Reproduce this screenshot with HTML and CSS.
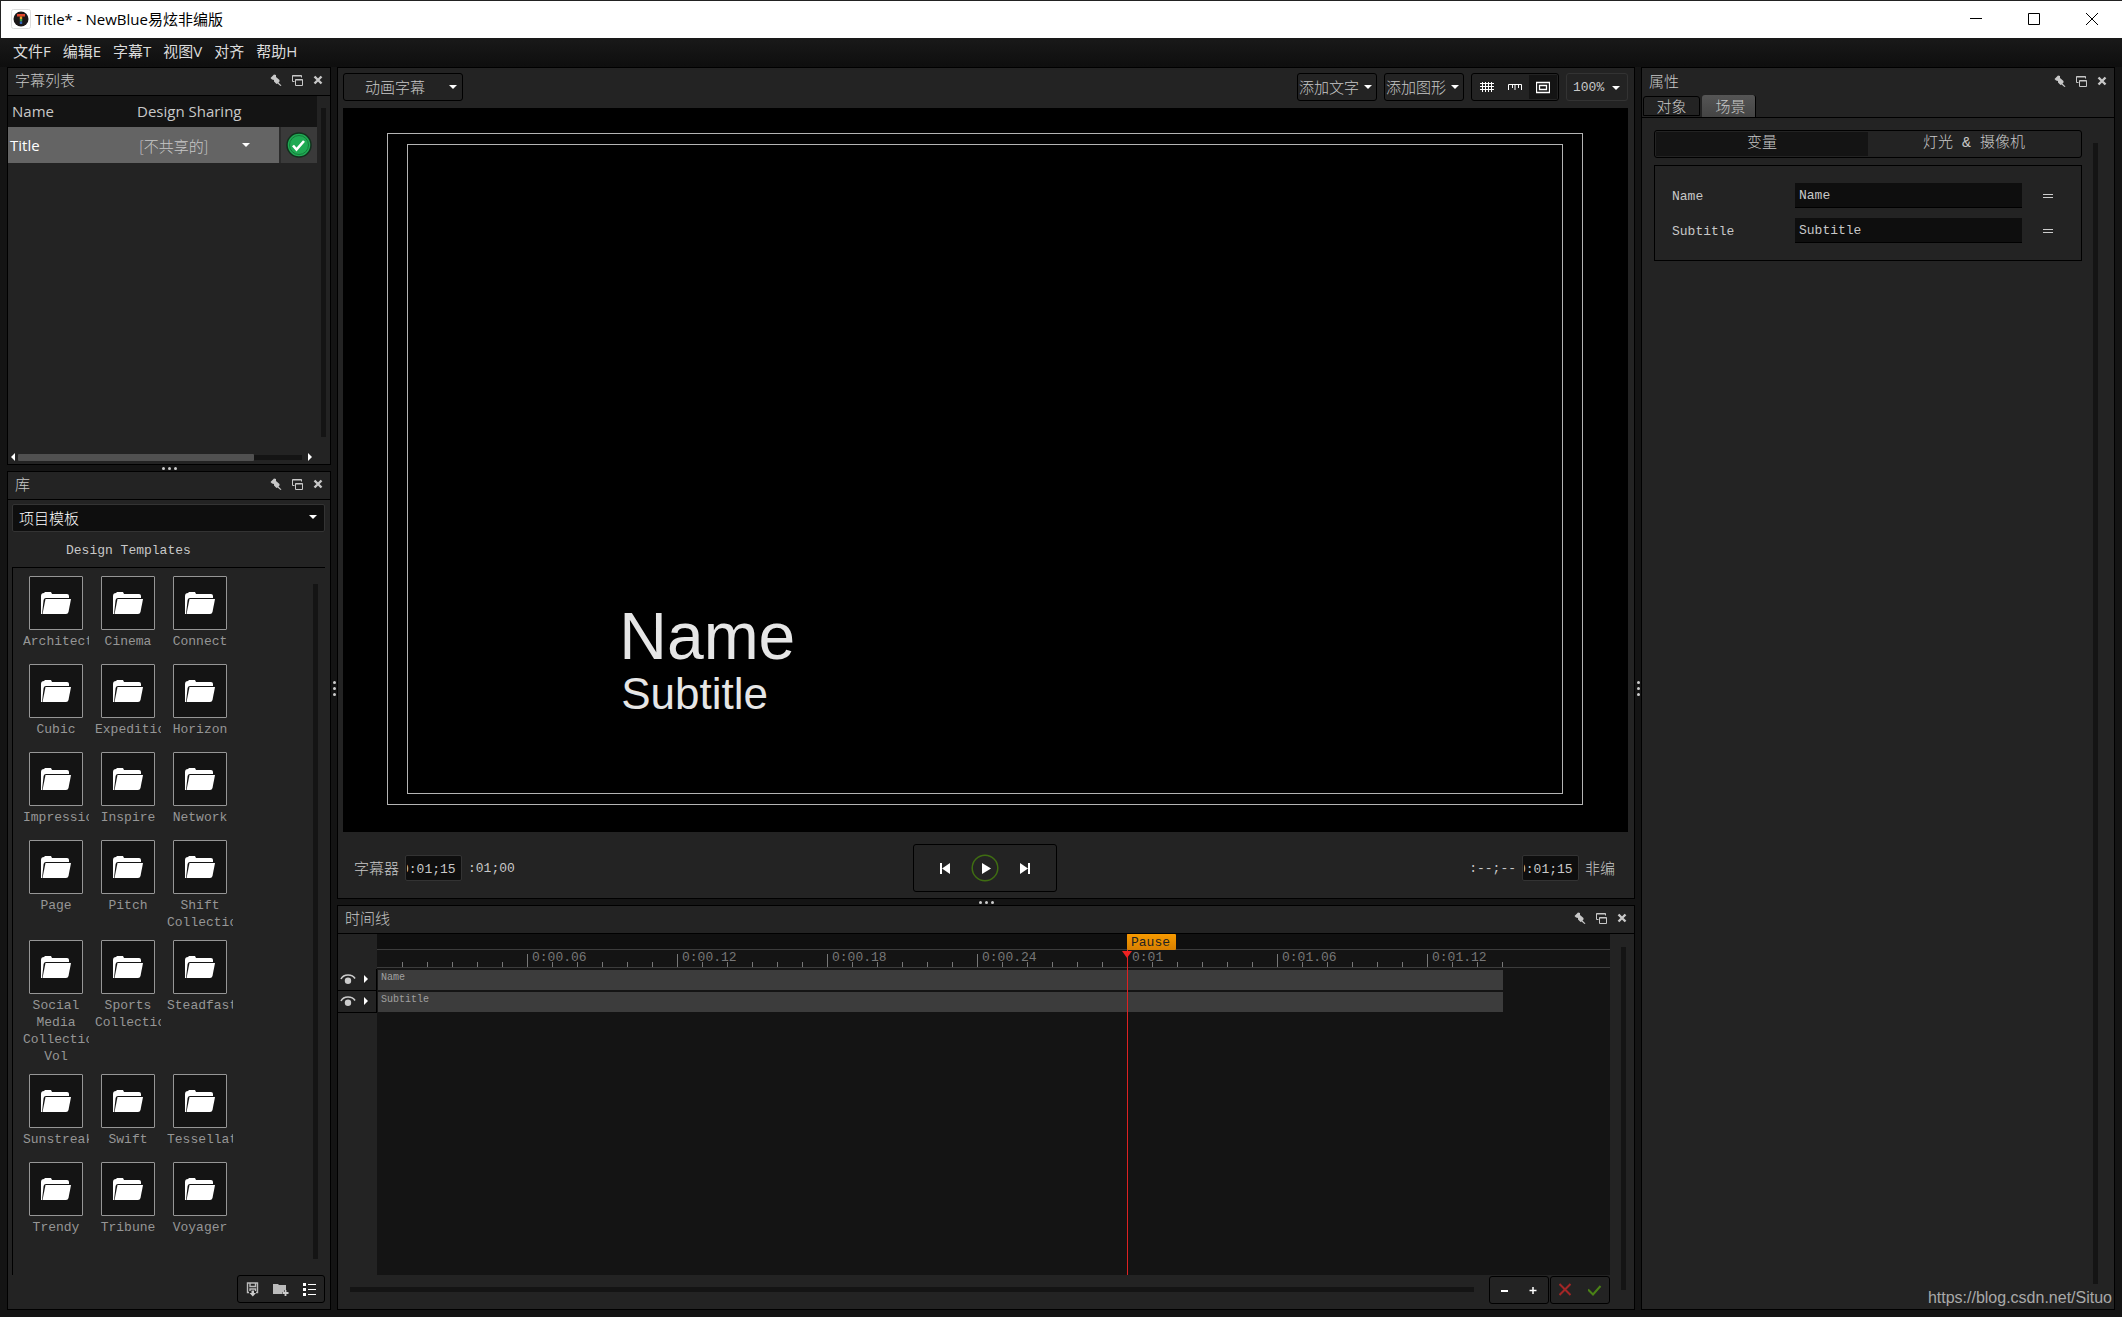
FILE: index.html
```html
<!DOCTYPE html>
<html lang="zh-CN">
<head>
    <meta charset="UTF-8">
    <meta name="viewport" content="width=device-width, initial-scale=1.0">
    <title>Title* - NewBlue易炫非编版</title>
    <link rel="stylesheet" href="styles.css">
</head>
<body>
    <!-- shared icons -->
    <svg class="symbols" aria-hidden="true">
        <symbol id="pin" viewBox="0 0 12 12"><path d="M.5 4L4 .5L6 1V3L9.500 6V7.500L8.500 8.500L11.500 11.500L10.500 12L7.500 9.500L6.500 10L4 7.500V6L2 5.500Z" fill="#c8c8c8"/></symbol>
        <symbol id="float" viewBox="0 0 12 12"><path d="M3.500 7.500H1.500V1.500H10.500V3.500M1.500 2H10.500M4.500 5.500H11.500V11.500H4.500ZM4.500 6H11.500" fill="none" stroke="#c8c8c8"/></symbol>
        <symbol id="close" viewBox="0 0 12 12"><path d="M2.500 2.500L9.500 9.500M9.500 2.500L2.500 9.500" fill="none" stroke="#c8c8c8" stroke-width="2.400"/></symbol>
        <symbol id="folder" viewBox="0 0 30 22"><path d="M0 22V4Q0 1 3 1L4 0H10L11 2H26Q28 2 28 4V6H5Q3 6 2.600 8L1 22Z" fill="#fff"/><path d="M4.500 7H30L27.500 20Q27 22 25 22H1.500Z" fill="#fff"/></symbol>
        <symbol id="eye" viewBox="0 0 16 12"><path d="M1 6Q3 2 8 2Q13 2 15 5.500" fill="none" stroke="#ccc" stroke-width="1.600"/><circle cx="8" cy="7.800" r="3.200" fill="#ccc"/></symbol>
    </svg>

    <header class="titlebar">
        <svg class="logo" viewBox="0 0 20 20"><rect x=".5" y=".5" width="19" height="19" rx="2" fill="#fff" stroke="#ddd"/><circle cx="10" cy="10" r="7.500" fill="#1b1718"/><path d="M6 5H14V7.500H6Z" fill="#e0452b"/><path d="M8.800 7.500H11.200V10H8.800Z" fill="#e9a52b"/><path d="M8.800 10H11.200V12.500H8.800Z" fill="#3fa34d"/><path d="M8.800 12.500H11.200V15H8.800Z" fill="#2e62b5"/></svg>
        <h1>Title* - NewBlue易炫非编版</h1>
        <div class="window-buttons">
            <button aria-label="最小化"><svg viewBox="0 0 12 12"><path d="M0 5.500H12"/></svg></button>
            <button aria-label="最大化"><svg viewBox="0 0 12 12"><path d="M.5 .5H11.500V11.500H.5Z"/></svg></button>
            <button aria-label="关闭"><svg viewBox="0 0 12 12"><path d="M0 0L12 12M12 0L0 12"/></svg></button>
        </div>
    </header>

    <nav class="menubar">
        <button>文件F</button>
        <button>编辑E</button>
        <button>字幕T</button>
        <button>视图V</button>
        <button>对齐</button>
        <button>帮助H</button>
    </nav>

    <main class="workspace">
        <div class="column">
            <section class="panel list-panel">
                <div class="panel-head">
                    <h2>字幕列表</h2>
                    <button aria-label="固定"><svg><use href="#pin"/></svg></button>
                    <button aria-label="浮动"><svg><use href="#float"/></svg></button>
                    <button aria-label="关闭"><svg><use href="#close"/></svg></button>
                </div>
                <div class="list-body">
                    <div class="list-main">
                        <table>
                            <thead>
                                <tr><th class="col-name">Name</th><th class="col-share">Design Sharing</th><th class="col-state"></th></tr>
                            </thead>
                            <tbody>
                                <tr>
                                    <td class="cell-name">Title</td>
                                    <td><div class="drop share"><select aria-label="Design Sharing"><option>[不共享的]</option></select></div></td>
                                    <td class="cell-state"><svg viewBox="0 0 26 26"><circle cx="13" cy="13" r="12" fill="#1faa53" stroke="#12301d" stroke-width="1.500"/><circle cx="13" cy="13" r="9.500" fill="none" stroke="#167a3b"/><path d="M7 13.500L10.500 17.500L18 9" fill="none" stroke="#fff" stroke-width="2.600"/></svg></td>
                                </tr>
                            </tbody>
                        </table>
                        <div class="hscroll">
                            <i class="arrow left"></i>
                            <div class="track"><div class="thumb"></div></div>
                            <i class="arrow right"></i>
                        </div>
                    </div>
                    <div class="vscroll"></div>
                </div>
            </section>

            <div class="split horizontal"><i></i><i></i><i></i></div>

            <section class="panel library">
                <div class="panel-head">
                    <h2>库</h2>
                    <button aria-label="固定"><svg><use href="#pin"/></svg></button>
                    <button aria-label="浮动"><svg><use href="#float"/></svg></button>
                    <button aria-label="关闭"><svg><use href="#close"/></svg></button>
                </div>
                <div class="drop source"><select aria-label="库"><option>项目模板</option></select></div>
                <p class="library-title">Design Templates</p>
                <div class="library-body">
                    <div class="folders">
                        <button><span class="tile"><svg><use href="#folder"/></svg></span><span class="label">Architect</span></button>
                        <button><span class="tile"><svg><use href="#folder"/></svg></span><span class="label">Cinema</span></button>
                        <button><span class="tile"><svg><use href="#folder"/></svg></span><span class="label">Connect</span></button>
                        <button><span class="tile"><svg><use href="#folder"/></svg></span><span class="label">Cubic</span></button>
                        <button><span class="tile"><svg><use href="#folder"/></svg></span><span class="label">Expedition</span></button>
                        <button><span class="tile"><svg><use href="#folder"/></svg></span><span class="label">Horizon</span></button>
                        <button><span class="tile"><svg><use href="#folder"/></svg></span><span class="label">Impression</span></button>
                        <button><span class="tile"><svg><use href="#folder"/></svg></span><span class="label">Inspire</span></button>
                        <button><span class="tile"><svg><use href="#folder"/></svg></span><span class="label">Network</span></button>
                        <button><span class="tile"><svg><use href="#folder"/></svg></span><span class="label">Page</span></button>
                        <button><span class="tile"><svg><use href="#folder"/></svg></span><span class="label">Pitch</span></button>
                        <button><span class="tile"><svg><use href="#folder"/></svg></span><span class="label">Shift Collection</span></button>
                        <button><span class="tile"><svg><use href="#folder"/></svg></span><span class="label">Social Media Collection Vol</span></button>
                        <button><span class="tile"><svg><use href="#folder"/></svg></span><span class="label">Sports Collection</span></button>
                        <button><span class="tile"><svg><use href="#folder"/></svg></span><span class="label">Steadfast</span></button>
                        <button><span class="tile"><svg><use href="#folder"/></svg></span><span class="label">Sunstreak</span></button>
                        <button><span class="tile"><svg><use href="#folder"/></svg></span><span class="label">Swift</span></button>
                        <button><span class="tile"><svg><use href="#folder"/></svg></span><span class="label">Tessellate</span></button>
                        <button><span class="tile"><svg><use href="#folder"/></svg></span><span class="label">Trendy</span></button>
                        <button><span class="tile"><svg><use href="#folder"/></svg></span><span class="label">Tribune</span></button>
                        <button><span class="tile"><svg><use href="#folder"/></svg></span><span class="label">Voyager</span></button>
                    </div>
                    <div class="vscroll"></div>
                </div>
                <div class="box library-tools">
                    <button aria-label="保存模板"><svg viewBox="0 0 16 16"><path d="M5 11.500H3.500V2H13.500V11.500H12M6 2V5.500H11.500V2M6 10V8H11.500V10" fill="none" stroke="#bbb" stroke-width="1.400"/><path d="M7.500 9.500H10V12H12L8.800 15.500L5.500 12H7.500Z" fill="#ccc"/></svg></button>
                    <button aria-label="新建文件夹"><svg viewBox="0 0 16 16"><path d="M0 3H5L6 4H13V9H11V11H9V13H0Z" fill="#bbb"/><path d="M12.500 9V15M9.500 12H15.500" stroke="#ccc" stroke-width="1.800"/></svg></button>
                    <button aria-label="列表"><svg viewBox="0 0 16 16"><path d="M1 2H4V5H1ZM1 7H4V10H1ZM1 12H4V15H1Z" fill="#fff"/><path d="M6 3.500H14M6 8.500H14M6 13.500H14" stroke="#fff"/></svg></button>
                </div>
            </section>
        </div>

        <div class="split vertical"><i></i><i></i><i></i></div>

        <div class="column">
            <section class="panel designer">
                <div class="toolbar">
                    <div class="box drop mode"><select aria-label="字幕类型"><option>动画字幕</option></select></div>
                    <button class="box drop add">添加文字</button>
                    <button class="box drop add">添加图形</button>
                    <div class="box view-tools">
                        <button aria-label="网格"><svg viewBox="0 0 14 14"><path d="M0 3.500H14M0 6.500H14M0 9.500H14M2.500 2V12M5.500 2V12M8.500 2V12M11.500 2V12" stroke="#fff"/></svg></button>
                        <button aria-label="标尺"><svg viewBox="0 0 14 14"><path d="M.5 10V4.500H13.500V10M4.500 4V8M7 4V10M10.500 4V8" fill="none" stroke="#fff"/></svg></button>
                        <button class="on" aria-label="安全框"><svg viewBox="0 0 14 14"><path d="M.5 2.500H13.500V12.500H.5ZM3.500 5.500H10.500V9.500H3.500Z" fill="none" stroke="#fff" stroke-width="1.300"/></svg></button>
                    </div>
                    <div class="box drop zoom"><select aria-label="缩放"><option>100%</option></select></div>
                </div>
                <div class="stage">
                    <div class="safe-action"><div class="safe-title"></div></div>
                    <div class="caption">
                        <p class="caption-name">Name</p>
                        <p class="caption-sub">Subtitle</p>
                    </div>
                </div>
                <div class="transport">
                    <div class="time">
                        <label for="titler-time">字幕器</label>
                        <input id="titler-time" type="text" value="0:01;15">
                        <span>:01;00</span>
                    </div>
                    <div class="box play-tools">
                        <button aria-label="开头"><svg viewBox="0 0 28 28"><path d="M9 9H11V20H9ZM19 9V20L11 14.500Z" fill="#fff"/></svg></button>
                        <button aria-label="播放"><svg viewBox="0 0 28 28"><circle cx="14" cy="14" r="12.800" fill="none" stroke="#3f6d12" stroke-width="1.500"/><path d="M11 9V20L20 14.500Z" fill="#fff"/></svg></button>
                        <button aria-label="结尾"><svg viewBox="0 0 28 28"><path d="M9 9V20L17 14.500ZM17 9H19V20H17Z" fill="#fff"/></svg></button>
                    </div>
                    <div class="time end">
                        <span>:--;--</span>
                        <input id="nle-time" type="text" value="0:01;15">
                        <label for="nle-time">非编</label>
                    </div>
                </div>
            </section>

            <div class="split horizontal"><i></i><i></i><i></i></div>

            <section class="panel timeline">
                <div class="panel-head">
                    <h2>时间线</h2>
                    <button aria-label="固定"><svg><use href="#pin"/></svg></button>
                    <button aria-label="浮动"><svg><use href="#float"/></svg></button>
                    <button aria-label="关闭"><svg><use href="#close"/></svg></button>
                </div>
                <div class="timeline-body">
                    <div class="timeline-main">
                        <div class="timeline-grid">
                            <div class="heads">
                                <div class="head-row"><svg><use href="#eye"/></svg><i class="arrow right"></i></div>
                                <div class="head-row"><svg><use href="#eye"/></svg><i class="arrow right"></i></div>
                            </div>
                            <div class="lanes">
                                <div class="markers"></div>
                                <div class="ruler">
                                    <span></span><span>0:00.06</span><span>0:00.12</span><span>0:00.18</span><span>0:00.24</span><span>0:01</span><span>0:01.06</span><span>0:01.12</span>
                                </div>
                                <div class="clip">Name</div>
                                <div class="clip">Subtitle</div>
                                <div class="playhead"><span class="flag">Pause</span><i></i></div>
                            </div>
                        </div>
                        <div class="timeline-foot">
                            <div class="track"></div>
                            <div class="box">
                                <button aria-label="缩小"><svg viewBox="0 0 14 14"><path d="M3 8H10" stroke="#fff" stroke-width="2"/></svg></button>
                                <button aria-label="放大"><svg viewBox="0 0 14 14"><path d="M2.500 7.500H9.500M6 4V11" stroke="#fff" stroke-width="1.500"/></svg></button>
                            </div>
                            <div class="box">
                                <button aria-label="取消"><svg viewBox="0 0 14 14"><path d="M.5 1L11.500 12M11.500 1L.5 12" stroke="#a32626" stroke-width="2"/></svg></button>
                                <button aria-label="确定"><svg viewBox="0 0 14 14"><path d="M0 6.500L5 11.500L12.500 3" fill="none" stroke="#4a8216" stroke-width="2"/></svg></button>
                            </div>
                        </div>
                    </div>
                    <div class="vscroll"></div>
                </div>
            </section>
        </div>

        <div class="split vertical"><i></i><i></i><i></i></div>

        <section class="panel properties">
            <div class="panel-head">
                <h2>属性</h2>
                <button aria-label="固定"><svg><use href="#pin"/></svg></button>
                <button aria-label="浮动"><svg><use href="#float"/></svg></button>
                <button aria-label="关闭"><svg><use href="#close"/></svg></button>
            </div>
            <div class="tabs">
                <button>对象</button>
                <button class="on">场景</button>
            </div>
            <div class="properties-body">
                <div class="properties-main">
                    <div class="box segments">
                        <button class="on">变量</button>
                        <button>灯光 &amp; 摄像机</button>
                    </div>
                    <form class="variables">
                        <label for="var-name">Name</label>
                        <input id="var-name" type="text" value="Name">
                        <button type="button" aria-label="Name 选项"><svg viewBox="0 0 12 12"><path d="M0 4.500H10M0 7.500H10"/></svg></button>
                        <label for="var-sub">Subtitle</label>
                        <input id="var-sub" type="text" value="Subtitle">
                        <button type="button" aria-label="Subtitle 选项"><svg viewBox="0 0 12 12"><path d="M0 4.500H10M0 7.500H10"/></svg></button>
                    </form>
                </div>
                <div class="vscroll"></div>
            </div>
            <a class="watermark" href="https://blog.csdn.net/Situo">https://blog.csdn.net/Situo</a>
        </section>
    </main>
</body>
</html>
```
FILE: styles.css
```css
*{padding:0; margin:0; box-sizing:border-box;}

:root{
    --ui:"Open Sans", "Noto Sans CJK SC", sans-serif;
    --cjk:"Noto Sans CJK SC", sans-serif;
    --mono:"Liberation Mono", "Noto Sans CJK SC", monospace;
    --panel:#232323;
    --dark:#141414;
    --text:#c8c8c8;
}
body{
    display:flex;
    flex-direction:column;
    height:100vh;
    overflow:hidden;
    background:var(--dark);
    color:var(--text);
    font-family:var(--mono);
    font-size:13px;
}
button, input, select{
    font:inherit;
    color:inherit;
    background:none;
    border:0;
    border-radius:0;
    outline:0;
}
svg{display:block; flex:none;}
h1, h2, th{font-weight:normal;}
.symbols{position:absolute; width:0; height:0;}

/* title bar + menu */
.titlebar{
    display:flex;
    align-items:center;
    flex:none;
    height:38px;
    padding:0 1px 2px 10px;
    border-top:1px solid #222;
    border-left:1px solid #222;
    background:#fff;
    color:#000;
    font-family:var(--ui);
}
.titlebar h1{flex:1; margin-left:4px; font-size:15px; line-height:20px;}
.logo{width:20px; height:20px;}
.window-buttons{display:flex;}
.window-buttons button{display:flex; align-items:center; justify-content:center; width:58px; height:36px;}
.window-buttons svg{width:12px; height:12px; fill:none; stroke:#000;}

.menubar{
    display:flex;
    align-items:center;
    flex:none;
    height:29px;
    padding:0 0 4px 7px;
    background:linear-gradient(#191919, #0e0e0e);
}
.menubar button{padding:0 6px; font-family:var(--ui); font-size:15px; line-height:24px; color:#dcdcdc;}

/* layout */
.workspace{
    flex:1;
    min-height:0;
    display:grid;
    grid-template-columns:324px 6px minmax(0, 1fr) 6px 474px;
    padding:0 7px 7px;
}
.column{display:flex; flex-direction:column; min-width:0; min-height:0;}
.split{display:flex; align-items:center; justify-content:center; gap:3px; flex:none;}
.split.horizontal{height:6px;}
.split.vertical{flex-direction:column;}
.split i{width:3px; height:3px; border-radius:50%; background:#ccc;}

.panel{
    display:flex;
    flex-direction:column;
    min-height:0;
    border:1px solid #000;
    background:var(--panel);
}
.panel-head{
    display:flex;
    align-items:center;
    flex:none;
    height:28px;
    padding:0 2px 3px 7px;
    border-bottom:1px solid #000;
}
.panel-head h2{flex:1; font-family:var(--cjk); font-size:15px; font-weight:300; line-height:20px;}
.panel-head button{display:flex; align-items:center; justify-content:center; width:21px; height:24px;}
.panel-head svg{width:12px; height:12px;}

.box{border:1px solid #000; border-radius:3px;}
.vscroll{flex:none; width:5px; background:var(--dark);}
.arrow{width:0; height:0; border:4px solid transparent;}
.arrow.left{border-left-width:0; border-right-color:#fff;}
.arrow.right{border-right-width:0; border-left-color:#fff;}

/* drop-downs: caret at the right */
.drop{display:flex; align-items:center; font-family:var(--cjk); font-size:15px; font-weight:300;}
.drop select{flex:1; min-width:0; height:100%; margin-right:-16px; appearance:none;}
.drop select option{background:var(--dark);}
.drop::after{
    content:"";
    flex:none;
    margin-right:5px;
    border:4px solid transparent;
    border-top-color:#fff;
    border-bottom-width:0;
    pointer-events:none;
}

/* title list */
.list-panel{flex:none; height:398px;}
.list-body{flex:1; display:flex; min-height:0;}
.list-main{flex:1; display:flex; flex-direction:column;}
.list-body .vscroll{margin:12px 4px 27px;}
.list-panel table{width:100%; border-collapse:collapse; table-layout:fixed; font-family:var(--ui); font-size:15px;}
.list-panel th{height:31px; padding-bottom:2px; background:var(--dark); text-align:left;}
.list-panel td{height:36px; background:#646464;}
.list-panel .col-name{width:129px; padding-left:4px;}
.list-panel .col-state{width:37px;}
.list-panel .cell-name{padding-left:2px; color:#fff;}
.list-panel .cell-state{background:#3a3a3a; border-left:2px solid #2b2b2b;}
.cell-state svg{width:26px; height:26px; margin:0 auto;}
.share{height:36px; padding-left:2px; color:#c8c8c8;}
.share::after{margin-right:29px;}
.hscroll{display:flex; align-items:center; gap:3px; height:14px; margin-top:auto; padding:0 5px 0 3px;}
.hscroll .track{flex:1; height:5px; margin-right:3px; background:var(--dark);}
.hscroll .thumb{width:83%; height:7px; margin-top:-1px; border-radius:1px; background:#505050;}

/* library */
.library{flex:1;}
.source{
    flex:none;
    height:28px;
    margin:4px 5px 0 4px;
    padding:0 2px 2px 6px;
    border:1px solid #333;
    border-radius:2px;
    background:#0e0e0e;
    color:#fff;
}
.library-title{padding:10px 58px 7px; font-size:13px; line-height:18px;}
.library-body{
    flex:1;
    display:flex;
    min-height:0;
    margin:0 5px 0 4px;
    border-top:1px solid #000;
    border-left:1px solid #000;
}
.library-body .vscroll{margin:16px 7px 16px auto;}
.folders{
    display:grid;
    grid-template-columns:repeat(3, 66px);
    gap:9px 6px;
    align-content:start;
    padding:8px 10px;
}
.folders button{display:flex; flex-direction:column; align-items:center; min-height:79px; color:#969696;}
.tile{
    display:flex;
    align-items:center;
    justify-content:center;
    flex:none;
    width:54px;
    height:54px;
    border:1px solid #969696;
    border-radius:1px;
    background:var(--dark);
}
.tile svg{width:30px; height:22px;}
.label{width:100%; margin-top:3px; overflow:hidden; line-height:17px;}
.library-tools{display:flex; align-self:flex-end; width:88px; height:28px; margin:0 5px 6px 0;}
.library-tools button{flex:1; display:flex; align-items:center; justify-content:center;}
.library-tools svg{width:16px; height:16px;}

/* designer */
.designer{flex:1;}
.toolbar{display:flex; flex:none; gap:7px; height:40px; padding:5px 6px 7px 5px;}
.mode{width:120px; margin-right:auto; padding:0 0 1px 21px;}
.add{width:80px; padding:0 0 1px 1px; justify-content:space-between; white-space:nowrap;}
.add::after{margin-right:4px;}
.view-tools{display:flex; width:88px; padding:1px;}
.view-tools button{flex:1; display:flex; align-items:center; justify-content:center;}
.view-tools .on{background:var(--dark);}
.view-tools svg{width:14px; height:14px;}
.zoom{width:62px; padding:1px 0 0 6px; border-color:#333; font-family:var(--mono); font-size:13px;}
.zoom::after{margin-right:7px;}

.stage{
    position:relative;
    flex:1;
    display:flex;
    min-height:0;
    margin:0 6px 0 5px;
    padding:25px 45px 27px 44px;
    background:#000;
}
.safe-action{flex:1; display:flex; padding:10px 19px; border:1px solid #b4b4b4;}
.safe-title{flex:1; border:1px solid #b4b4b4;}
.caption{
    position:absolute;
    left:21.500%;
    top:68.500%;
    color:#e6e6e6;
    font-family:"Liberation Sans", Arial, sans-serif;
}
.caption-name{font-size:66px; line-height:64px;}
.caption-sub{padding:1px 0 0 2px; font-size:44px; line-height:50px;}

.transport{
    display:grid;
    grid-template-columns:1fr 144px 1fr;
    align-items:center;
    flex:none;
    height:66px;
    padding:12px 19px 6px 16px;
}
.play-tools{display:flex; align-items:center; justify-content:center; gap:12px; height:48px;}
.play-tools svg{width:28px; height:28px;}
.time{display:flex; align-items:center;}
.time.end{justify-content:flex-end;}
.time label{padding-bottom:2px; font-family:var(--cjk); font-size:15px; font-weight:300;}
.time input{
    width:57px;
    height:26px;
    margin:0 6px;
    padding:2px 1px 0;
    text-indent:-6px;
    border:1px solid #333;
    border-radius:2px;
    background:#0e0e0e;
}

/* timeline */
.timeline{flex:none; height:405px;}
.timeline-body{flex:1; display:flex; min-height:0;}
.timeline-body > .vscroll{margin:13px 8px 19px 11px;}
.timeline-main{flex:1; display:flex; flex-direction:column; min-width:0;}
.timeline-grid{flex:1; display:flex; min-height:0;}
.heads{flex:none; width:39px; padding-top:35px;}
.head-row{
    display:flex;
    align-items:center;
    gap:8px;
    height:22px;
    padding:0 0 2px 2px;
    border-right:1px solid #000;
    border-bottom:1px solid #000;
}
.head-row svg{width:16px; height:12px;}
.lanes{position:relative; flex:1; min-width:0; overflow:hidden; background:var(--dark);}
.markers{height:16px; border-bottom:1px solid #3c3c3c; background:#101010;}
.ruler{
    display:flex;
    height:18px;
    margin-bottom:2px;
    border-bottom:1px solid #3c3c3c;
    background:repeating-linear-gradient(to right, #777 0 1px, transparent 1px 25px) 25px 100% / 1101px 5px no-repeat;
}
.ruler span{flex:none; width:150px; padding-left:5px; color:#777; line-height:16px;}
.ruler span + span{background:linear-gradient(#777, #777) 0 100% / 1px 13px no-repeat;}
.clip{
    width:1125px;
    height:20px;
    margin:0 0 2px 1px;
    padding-left:3px;
    background:#3c3c3c;
    color:#a0a0a0;
    font-size:10px;
    line-height:16px;
}
.playhead{position:absolute; left:750px; top:0; bottom:0; width:1px; background:#d22;}
.playhead .flag{
    display:block;
    width:49px;
    height:16px;
    padding-left:4px;
    border-radius:1px;
    background:linear-gradient(#f79a00, #d87f00);
    color:#222;
    line-height:17px;
}
.playhead i{display:block; width:0; margin:1px 0 0 -5px; border:5px solid transparent; border-top:7px solid #e22; border-bottom:0;}
.timeline-foot{display:flex; align-items:center; flex:none; height:34px; padding:0 0 5px 12px;}
.timeline-foot .track{flex:1; height:5px; margin-right:14px; background:var(--dark);}
.timeline-foot .box{display:flex; width:60px; height:28px; margin-left:1px;}
.timeline-foot button{flex:1; display:flex; align-items:center; justify-content:center;}
.timeline-foot svg{width:14px; height:14px;}

/* properties */
.properties .panel-head{border-bottom:0;}
.tabs{display:flex; align-items:flex-end; gap:2px; flex:none; height:22px; padding-left:1px; border-bottom:1px solid #000;}
.tabs button{
    width:57px;
    height:20px;
    margin-bottom:1px;
    border:1px solid #000;
    border-radius:3px 3px 0 0;
    font-family:var(--cjk);
    font-size:15px;
    font-weight:300;
    line-height:18px;
}
.tabs .on{width:54px; height:22px; margin-bottom:0; padding-left:4px; border-width:0 1px 0 0; background:linear-gradient(#555, #444);}
.properties-body{flex:1; display:flex; min-height:0;}
.properties-main{flex:1; padding:12px 0 0 12px;}
.properties-body .vscroll{margin:25px 16px 0 11px;}
.segments{display:flex; height:28px; padding:1px;}
.segments button{flex:1; font-family:var(--mono); font-size:15px; font-weight:300; line-height:22px;}
.segments .on{background:var(--dark);}
.variables{
    display:grid;
    grid-template-columns:123px 227px 1fr;
    row-gap:10px;
    align-items:center;
    margin-top:7px;
    padding:17px 0 17px 17px;
    border:1px solid #000;
}
.variables label{padding-top:2px;}
.variables input{height:25px; padding-left:4px; border-bottom:1px solid #000; background:#0e0e0e;}
.variables button{justify-self:start; margin-left:21px;}
.variables svg{width:12px; height:12px; stroke:#ccc; fill:none;}
.watermark{
    align-self:flex-end;
    padding:5px 2px 2px 0;
    color:#a9a9a9;
    font-family:"Liberation Sans", Arial, sans-serif;
    font-size:16px;
    line-height:18px;
    text-decoration:none;
}
```
